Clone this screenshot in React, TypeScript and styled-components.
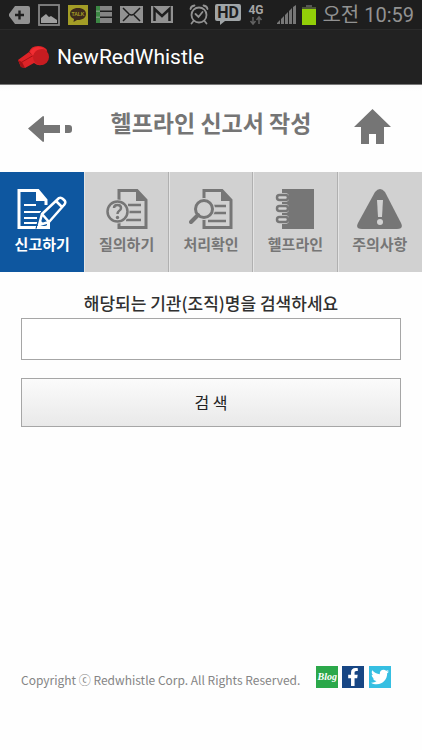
import React from "react";
import styled, { createGlobalStyle } from "styled-components";
import { FaFacebookF, FaTwitter } from "react-icons/fa";

const GlobalStyle = createGlobalStyle`
  * { box-sizing: border-box; }
  body {
    margin: 0;
    background: #fefefe;
    font-family: "Noto Sans CJK KR", sans-serif;
  }
`;

const Screen = styled.div`
  display: flex;
  flex-direction: column;
  min-height: 100vh;
`;

const StatusBar = styled.div`
  display: flex;
  align-items: center;
  justify-content: space-between;
  height: 29px;
  padding: 0 8px;
  background: #1e1e1e;
  color: #929292;
  overflow: hidden;
`;

const IconGroup = styled.div<{ $gap: number }>`
  display: flex;
  align-items: center;
  gap: ${(p) => p.$gap}px;

  svg { display: block; flex: none; }
`;

const Clock = styled.time`
  font: 20px/28px Roboto, "Noto Sans CJK KR", sans-serif;
  white-space: nowrap;
`;

const AppBar = styled.header`
  display: flex;
  align-items: center;
  gap: 7px;
  height: 56px;
  padding: 0 17px;
  background: #222;
  border-top: 1px solid #2b2b2b;
  border-bottom: 1px solid #777;
  color: #fff;
`;

const AppName = styled.span`
  font: 21px/28px Roboto, sans-serif;
`;

const PageHeader = styled.div`
  display: grid;
  grid-template-columns: 44px 1fr 44px;
  align-items: center;
  height: 87px;
  padding: 0 28px;
  background: linear-gradient(#f8f8f8, #fefefe 6px);
`;

const PageTitle = styled.h1`
  margin: 0;
  padding-bottom: 14px;
  color: #757575;
  font-size: 23px;
  font-weight: 700;
  line-height: 32px;
  text-align: center;
  white-space: nowrap;
`;

const IconButton = styled.button`
  display: flex;
  justify-content: center;
  padding: 0;
  border: 0;
  background: none;
  color: #757575;
`;

const Tabs = styled.nav`
  display: grid;
  grid-template-columns: repeat(5, 1fr);
`;

const Tab = styled.a<{ $active?: boolean }>`
  display: flex;
  flex-direction: column;
  align-items: center;
  gap: 3px;
  height: 100px;
  padding-top: 17px;
  background: ${(p) => (p.$active ? "#0e57a0" : "#d1d1d1")};
  color: ${(p) => (p.$active ? "#fff" : "#767676")};
  border-left: 1px solid ${(p) => (p.$active ? "#0e57a0" : "#e4e4e4")};
  border-right: 1px solid ${(p) => (p.$active ? "#0e57a0" : "#b0b0b0")};
  font-size: 15px;
  font-weight: 700;
  line-height: 24px;
  text-decoration: none;
  white-space: nowrap;

  &:last-child { border-right-color: #d1d1d1; }
`;

const SearchForm = styled.form`
  display: flex;
  flex-direction: column;
  padding: 18px 21px;
`;

const SearchLabel = styled.label`
  margin-bottom: 2px;
  color: #303030;
  font-size: 17px;
  font-weight: 500;
  line-height: 26px;
  text-align: center;
`;

const SearchInput = styled.input`
  width: 100%;
  height: 42px;
  padding: 0 12px;
  border: 1px solid #a6a6a6;
  border-radius: 0;
  background: #fff;
  font: inherit;
`;

const SearchButton = styled.button`
  height: 49px;
  margin-top: 18px;
  padding: 0 0 2px;
  border: 1px solid #a6a6a6;
  background: linear-gradient(#fbfbfb, #e9e9e9);
  color: #222;
  font-family: inherit;
  font-size: 16px;
`;

const Footer = styled.footer`
  display: flex;
  align-items: center;
  gap: 16px;
  margin-top: auto;
  padding: 0 21px 60px;
`;

const Copyright = styled.p`
  margin: 0;
  padding-top: 6px;
  color: #858585;
  font-size: 12px;
  line-height: 20px;
  white-space: nowrap;
`;

const Social = styled.div`
  display: flex;
  gap: 4px;
`;

const SocialLink = styled.a<{ $color: string }>`
  display: flex;
  align-items: center;
  justify-content: center;
  width: 22px;
  height: 22px;
  background: ${(p) => p.$color};
  color: #fff;
  font: italic 700 10px/22px "Liberation Serif", serif;
  text-decoration: none;

  &:last-child { margin-left: 1px; }
`;

const PlusTagIcon = () => (
  <svg width="22" height="20" viewBox="0 0 22 20">
    <path d="M7 1H20Q22 1 22 3V17Q22 19 20 19H7L1 11V9Z" fill="#929292" />
    <path d="M7 10H16M11.5 5.500V14.500" stroke="#1e1e1e" strokeWidth="2.400" />
  </svg>
);

const GalleryIcon = () => (
  <svg width="22" height="22" viewBox="0 0 22 22">
    <rect x="1" y="1" width="20" height="20" fill="none" stroke="#858585" strokeWidth="1.800" />
    <path d="M3 19V14L8 10L11 13L13 12L19 16V19Z" fill="#a0a0a0" />
  </svg>
);

const TalkIcon = () => (
  <svg width="20" height="20" viewBox="0 0 20 20">
    <rect width="20" height="20" fill="#a39d26" />
    <path d="M10 3C5 3 2 5.500 2 9C2 11 3.500 13 6 14L5.500 17L9 15C14 15.300 18 13 18 9C18 5.500 15 3 10 3Z" fill="#3d2a1c" />
    <text x="10" y="11" textAnchor="middle" fontSize="5" fontWeight="700" fontFamily="Liberation Sans, sans-serif" fill="#a39d26">TALK</text>
  </svg>
);

const ListIcon = () => (
  <svg width="16" height="17" viewBox="0 0 16 17">
    <path d="M0 0H4V17H0Z" fill="#3c8744" />
    <path d="M4 0H16V4.500H4ZM4 6H16V10.500H4ZM4 12H16V17H4Z" fill="#858585" />
    <path d="M0 5.200H4M0 11.200H4" stroke="#8aac8d" />
  </svg>
);

const MailIcon = () => (
  <svg width="23" height="17" viewBox="0 0 23 17">
    <path d="M0 0H23V17H0Z" fill="#929292" />
    <path d="M3 2L9 8Q11.500 10 14 8L20 2M3 15L9 9M20 15L14 9" fill="none" stroke="#1e1e1e" strokeWidth="1.500" />
  </svg>
);

const GmailIcon = () => (
  <svg width="22" height="17" viewBox="0 0 22 17">
    <path d="M0 0H22V17H0Z" fill="#929292" />
    <path d="M3.500 15V3L11 10L18.500 3V15" fill="none" stroke="#1e1e1e" strokeWidth="2.500" />
  </svg>
);

const AlarmIcon = () => (
  <svg width="20" height="21" viewBox="0 0 20 21" fill="none" stroke="#929292" strokeWidth="1.800" strokeLinecap="round">
    <circle cx="10" cy="11" r="7.500" />
    <path d="M6.500 10L9.500 13L13.500 8M1.500 5Q2 2 5.500 1.500M18.500 5Q18 2 14.500 1.500M4.500 17L2.500 19.500M15.500 17L17.500 19.500" />
  </svg>
);

const HdIcon = () => (
  <svg width="26" height="21" viewBox="0 0 26 21">
    <path d="M2 0H24Q26 0 26 2V15Q26 17 24 17H10L5 21V17H2Q0 17 0 15V2Q0 0 2 0Z" fill="#a0a5a7" />
    <text x="13" y="14" textAnchor="middle" fontSize="16" fontWeight="700" fontFamily="Roboto, sans-serif" fill="#1e1e1e">HD</text>
  </svg>
);

const NetworkIcon = () => (
  <svg width="18" height="22" viewBox="0 0 18 22">
    <text x="9" y="10" textAnchor="middle" fontSize="12" fontWeight="700" fontFamily="Roboto, sans-serif" fill="#a5a5a5">4G</text>
    <path d="M6 13V19M3.500 17L6 20L8.500 17M12 20V14M9.500 16L12 13L14.500 16" fill="none" stroke="#626262" strokeWidth="1.500" />
  </svg>
);

const SignalIcon = () => (
  <svg width="19" height="19" viewBox="0 0 19 19" fill="#777">
    <path d="M0 19V18L3 15V19ZM4 19V14L7 11V19ZM8 19V10L11 7V19ZM12 19V6L15 3V19ZM16 19V2L19 0V19Z" />
  </svg>
);

const BatteryIcon = () => (
  <svg width="14" height="20" viewBox="0 0 14 20">
    <path d="M4 0H10V3H4Z" fill="#555" />
    <path d="M0 2H14V4H0Z" fill="#4d5638" />
    <path d="M0 4H14V20H0Z" fill="#92ce08" />
  </svg>
);

const WhistleIcon = () => (
  <svg width="33" height="24" viewBox="0 0 33 24">
    <path d="M1 15L12 7Q14 1 21 1Q27 1 30 5L27 19Q22 22 17 18L8 23L4 22Z" fill="#de2327" />
    <path d="M1 15L5 17L8 23L4 22Z" fill="#a41216" />
    <path d="M5 17L17 10M12 7L16 10" stroke="#a41216" strokeWidth="1" />
    <circle cx="24" cy="12" r="8" fill="#c71c21" />
    <path d="M13 7Q16 2 21 2Q25 2 27 4Q18 3 16 11Z" fill="#f12d32" />
  </svg>
);

const BackIcon = () => (
  <svg width="44" height="26" viewBox="0 0 44 26" fill="currentColor">
    <path d="M0 12.500L15 0Q16 0 16 1V9H32V17H16V25Q16 26 15 26ZM37 9H41Q44 9 44 12V14Q44 17 41 17H37Z" />
  </svg>
);

const HomeIcon = () => (
  <svg width="37" height="39" viewBox="0 0 37 39" fill="currentColor">
    <path d="M18.500 0L37 18H30V35H22V25H15V35H7V18H0Z" />
  </svg>
);

const DocumentShape = ({ x }: { x: number }) => (
  <g transform={`translate(${x} 0)`}>
    <path d="M2 1.500H20L29 11V38.500H2Z" fill="none" stroke="currentColor" strokeWidth="3" />
    <path d="M19 1L30 12H19Z" fill="currentColor" />
  </g>
);

const WriteIcon = () => (
  <svg width="50" height="40" viewBox="0 0 50 40">
    <path d="M30 28V38.500H2V1.500H21L29 11V16" fill="none" stroke="currentColor" strokeWidth="3" />
    <path d="M19 1L30 12H19Z" fill="currentColor" />
    <path d="M7 16H19M7 23H24M7 29H20M7 34H20" stroke="currentColor" strokeWidth="2.200" />
    <path d="M22 36L25 25L42 9Q44 8 46 10L48 12Q49 14 47 16L32 33Z" fill="#0e57a0" stroke="#0e57a0" strokeWidth="5" />
    <path d="M22 36L25 25L42 9Q44 8 46 10L48 12Q49 14 47 16L32 33ZM25 25L32 33M39 12L45 18" fill="none" stroke="currentColor" strokeWidth="2.500" strokeLinejoin="round" />
    <path d="M21 37L23 31L27 35Z" fill="currentColor" />
    <path d="M20 38.500H31.500V33" fill="none" stroke="currentColor" strokeWidth="3" />
  </svg>
);

const QuestionIcon = () => (
  <svg width="42" height="40" viewBox="0 0 42 40">
    <DocumentShape x={11} />
    <path d="M22 16H35M22 23H35M20 31H35" stroke="currentColor" strokeWidth="2.500" />
    <circle cx="11.500" cy="22.500" r="12" fill="#d1d1d1" />
    <circle cx="11.500" cy="22.500" r="10" fill="none" stroke="currentColor" strokeWidth="2.500" />
    <path d="M8 19Q8 16 11.500 16Q15 16 15 19Q15 21 13 22Q11.500 23 11.500 25" fill="none" stroke="currentColor" strokeWidth="2.500" />
    <circle cx="11.500" cy="28.500" r="1.700" fill="currentColor" />
  </svg>
);

const InspectIcon = () => (
  <svg width="44" height="40" viewBox="0 0 44 40">
    <DocumentShape x={13} />
    <path d="M24 17H37M24 24H37M19 32H37" stroke="currentColor" strokeWidth="2.500" />
    <circle cx="15" cy="20" r="11" fill="#d1d1d1" />
    <circle cx="15" cy="20" r="8.500" fill="none" stroke="currentColor" strokeWidth="3" />
    <path d="M9 26L2 33" stroke="currentColor" strokeWidth="4" strokeLinecap="round" />
  </svg>
);

const NotebookIcon = () => (
  <svg width="40" height="40" viewBox="0 0 40 40">
    <path d="M7 0H39V40H7Z" fill="currentColor" />
    {[6, 17, 28].map((y) => (
      <g key={y}>
        <rect x="0" y={y - 2} width="14" height="9" rx="4" fill="#d1d1d1" />
        <rect x="2" y={y} width="11" height="5" rx="2.500" fill="#d1d1d1" stroke="currentColor" strokeWidth="2.500" />
      </g>
    ))}
  </svg>
);

const WarningIcon = () => (
  <svg width="46" height="40" viewBox="0 0 46 40">
    <path d="M18 3Q23 -3 28 3L44 34Q47 40 40 40H5Q-2 40 1 34Z" fill="currentColor" />
    <path d="M20 11H26L25 28H21Z" fill="#d1d1d1" />
    <circle cx="23" cy="33" r="3" fill="#d1d1d1" />
  </svg>
);

const tabs = [
  { label: "신고하기", Icon: WriteIcon },
  { label: "질의하기", Icon: QuestionIcon },
  { label: "처리확인", Icon: InspectIcon },
  { label: "헬프라인", Icon: NotebookIcon },
  { label: "주의사항", Icon: WarningIcon },
];

export default function App() {
  return (
    <Screen>
      <GlobalStyle />
      <StatusBar>
        <IconGroup $gap={8}>
          <PlusTagIcon />
          <GalleryIcon />
          <TalkIcon />
          <ListIcon />
          <MailIcon />
          <GmailIcon />
        </IconGroup>
        <IconGroup $gap={6}>
          <AlarmIcon />
          <HdIcon />
          <NetworkIcon />
          <span />
          <SignalIcon />
          <BatteryIcon />
          <Clock dateTime="10:59">오전 10:59</Clock>
        </IconGroup>
      </StatusBar>
      <AppBar>
        <WhistleIcon />
        <AppName>NewRedWhistle</AppName>
      </AppBar>
      <PageHeader>
        <IconButton type="button" aria-label="뒤로">
          <BackIcon />
        </IconButton>
        <PageTitle>헬프라인 신고서 작성</PageTitle>
        <IconButton type="button" aria-label="홈">
          <HomeIcon />
        </IconButton>
      </PageHeader>
      <Tabs>
        {tabs.map(({ label, Icon }, index) => (
          <Tab key={label} href="#" $active={index === 0}>
            <Icon />
            {label}
          </Tab>
        ))}
      </Tabs>
      <SearchForm onSubmit={(e) => e.preventDefault()}>
        <SearchLabel htmlFor="organization">해당되는 기관(조직)명을 검색하세요</SearchLabel>
        <SearchInput id="organization" type="text" />
        <SearchButton type="submit">검 색</SearchButton>
      </SearchForm>
      <Footer>
        <Copyright>Copyright ⓒ Redwhistle Corp. All Rights Reserved.</Copyright>
        <Social>
          <SocialLink href="#" $color="#2ba84a">Blog</SocialLink>
          <SocialLink href="#" $color="#174684" aria-label="Facebook">
            <FaFacebookF size={18} />
          </SocialLink>
          <SocialLink href="#" $color="#36bfe2" aria-label="Twitter">
            <FaTwitter size={18} />
          </SocialLink>
        </Social>
      </Footer>
    </Screen>
  );
}
